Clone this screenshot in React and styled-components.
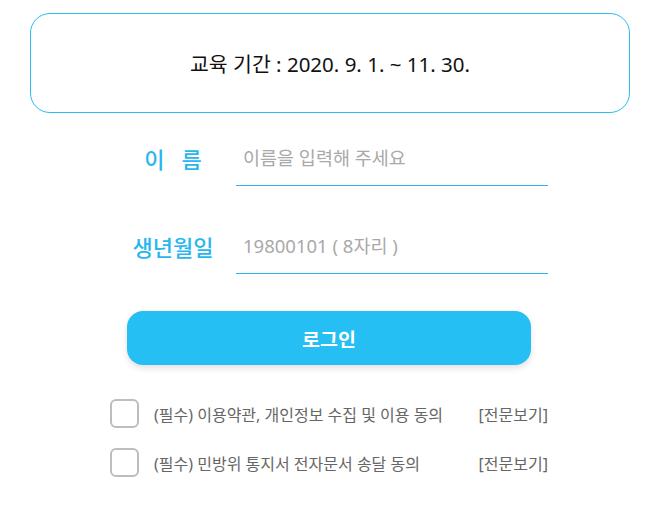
import React from "react";
import styled, { createGlobalStyle } from "styled-components";

const GlobalStyle = createGlobalStyle`
  html, body {
    margin: 0;
    padding: 0;
    background: #fff;
  }
  body {
    font-family: "Noto Sans", "Noto Sans CJK KR", sans-serif;
  }
`;

const agreements = [
  "이용약관, 개인정보 수집 및 이용 동의",
  "민방위 통지서 전자문서 송달 동의",
];

export default function App() {
  return (
    <>
      <GlobalStyle />
      <Page>
        <PeriodBox>교육 기간 : 2020. 9. 1. ~ 11. 30.</PeriodBox>

        <Form>
          <Field>
            <Label>이&nbsp;&nbsp;&nbsp;름</Label>
            <Input placeholder="이름을 입력해 주세요" />
          </Field>
          <Field>
            <Label>생년월일</Label>
            <Input placeholder="19800101 ( 8자리 )" />
          </Field>
        </Form>

        <LoginButton>로그인</LoginButton>

        <Agreements>
          {agreements.map((a) => (
            <AgreeRow key={a}>
              <Check type="checkbox" />
              <AgreeText>(필수) {a}</AgreeText>
              <ViewAll>[전문보기]</ViewAll>
            </AgreeRow>
          ))}
        </Agreements>
      </Page>
    </>
  );
}

const Page = styled.div`
  width: 600px;
  padding: 13px 0 0 30px;
  display: flex;
  flex-direction: column;
`;

const PeriodBox = styled.div`
  height: 98px;
  border: 1px solid #29bdf2;
  border-radius: 20px;
  display: flex;
  align-items: center;
  justify-content: center;
  font-size: 20.5px;
  color: #111;
`;

const Form = styled.div`
  display: flex;
  flex-direction: column;
  gap: 44px;
  margin-top: 29px;
  padding-left: 93px;
`;

const Field = styled.div`
  display: grid;
  grid-template-columns: 100px 312px;
  column-gap: 13px;
  align-items: center;
`;

const Label = styled.label`
  text-align: center;
  font-size: 22px;
  color: #29b6ef;
  font-weight: 500;
  padding-bottom: 12px;
  white-space: nowrap;
`;

const Input = styled.input`
  height: 44px;
  box-sizing: border-box;
  border: none;
  border-bottom: 1px solid #22b8f0;
  outline: none;
  padding: 0 0 12px 7px;
  font-family: inherit;
  font-size: 18.5px;
  color: #333;
  &::placeholder {
    color: #a9a9a9;
  }
`;

const LoginButton = styled.button`
  align-self: flex-start;
  margin: 37px 0 0 97px;
  width: 404px;
  height: 54px;
  border: none;
  border-radius: 16px;
  background: #25bff4;
  color: #fff;
  font-family: inherit;
  font-size: 19.5px;
  font-weight: 700;
  box-shadow: 0 3px 6px rgba(0, 0, 0, 0.12);
  cursor: pointer;
`;

const Agreements = styled.div`
  display: flex;
  flex-direction: column;
  gap: 20px;
  margin: 34px 0 0 80px;
  width: 438px;
`;

const AgreeRow = styled.label`
  display: flex;
  align-items: center;
  font-size: 16px;
  color: #666;
`;

const Check = styled.input`
  appearance: none;
  margin: 0 15px 0 0;
  width: 29px;
  height: 29px;
  box-sizing: border-box;
  border: 2px solid #bdbdbd;
  border-radius: 6px;
  background: #fff;
`;

const AgreeText = styled.span`
  flex: 1;
`;

const ViewAll = styled.span`
  color: #666;
`;
